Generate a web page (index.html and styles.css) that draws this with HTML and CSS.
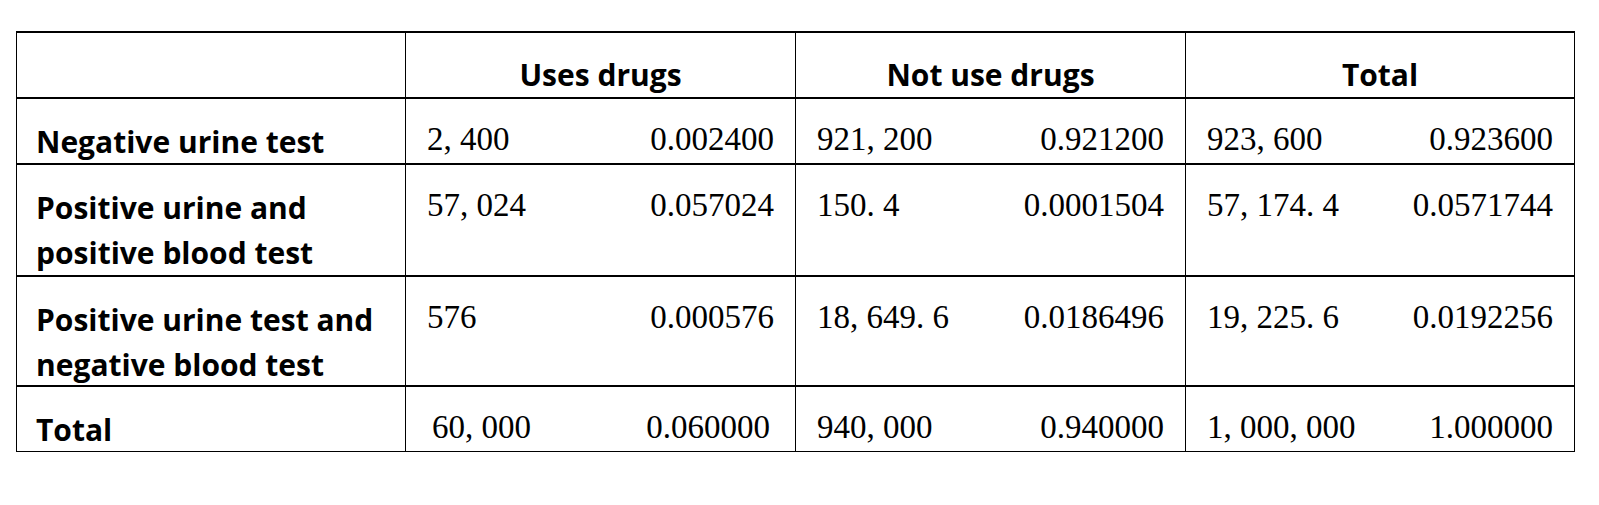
FILE: index.html
```html
<!DOCTYPE html>
<html lang="en">
<head>
    <meta charset="UTF-8">
    <title>Urine and blood test table</title>
    <link rel="stylesheet" href="styles.css">
</head>
<body>
    <div class="table">
        <!-- header row -->
        <div class="cell"></div>
        <div class="cell head">Uses drugs</div>
        <div class="cell head">Not use drugs</div>
        <div class="cell head">Total</div>

        <div class="cell label">Negative urine test</div>
        <div class="cell nums"><span>2, 400</span><span>0.002400</span></div>
        <div class="cell nums"><span>921, 200</span><span>0.921200</span></div>
        <div class="cell nums"><span>923, 600</span><span>0.923600</span></div>

        <div class="cell label">Positive urine and<br>positive blood test</div>
        <div class="cell nums"><span>57, 024</span><span>0.057024</span></div>
        <div class="cell nums"><span>150. 4</span><span>0.0001504</span></div>
        <div class="cell nums"><span>57, 174. 4</span><span>0.0571744</span></div>

        <div class="cell label">Positive urine test and<br>negative blood test</div>
        <div class="cell nums"><span>576</span><span>0.000576</span></div>
        <div class="cell nums"><span>18, 649. 6</span><span>0.0186496</span></div>
        <div class="cell nums"><span>19, 225. 6</span><span>0.0192256</span></div>

        <div class="cell label">Total</div>
        <div class="cell nums inset"><span>60, 000</span><span>0.060000</span></div>
        <div class="cell nums"><span>940, 000</span><span>0.940000</span></div>
        <div class="cell nums"><span>1, 000, 000</span><span>1.000000</span></div>
    </div>
</body>
</html>
```

FILE: styles.css
```css
* {
    margin: 0;
    padding: 0;
    box-sizing: border-box;
}

body {
    background: #fff;
    color: #000;
}

/* the lines are the black background showing through the gaps */
.table {
    display: grid;
    grid-template-columns: 388px 389px 389px 388px;
    grid-template-rows: 64px 64px 110px 108px 64px;
    column-gap: 1px;
    row-gap: 2px;
    width: fit-content;
    margin: 31px 0 0 16px;
    background: #000;
    border: 1px solid #000;
    border-top-width: 2px;
}

.cell {
    background: #fff;
}

.head,
.label {
    font-family: "Open Sans", Arial, sans-serif;
    font-weight: 700;
    font-size: 30px;
    line-height: 45px;
}

.head {
    text-align: center;
    padding-top: 19px;
}

.label {
    padding: 20px 0 0 19px;
}

.nums {
    display: flex;
    justify-content: space-between;
    padding: 18px 21px 0;
    font-family: "Liberation Serif", "Times New Roman", serif;
    font-size: 33px;
    line-height: 45px;
}

.nums.inset {
    padding: 18px 25px 0 26px;
}
```
